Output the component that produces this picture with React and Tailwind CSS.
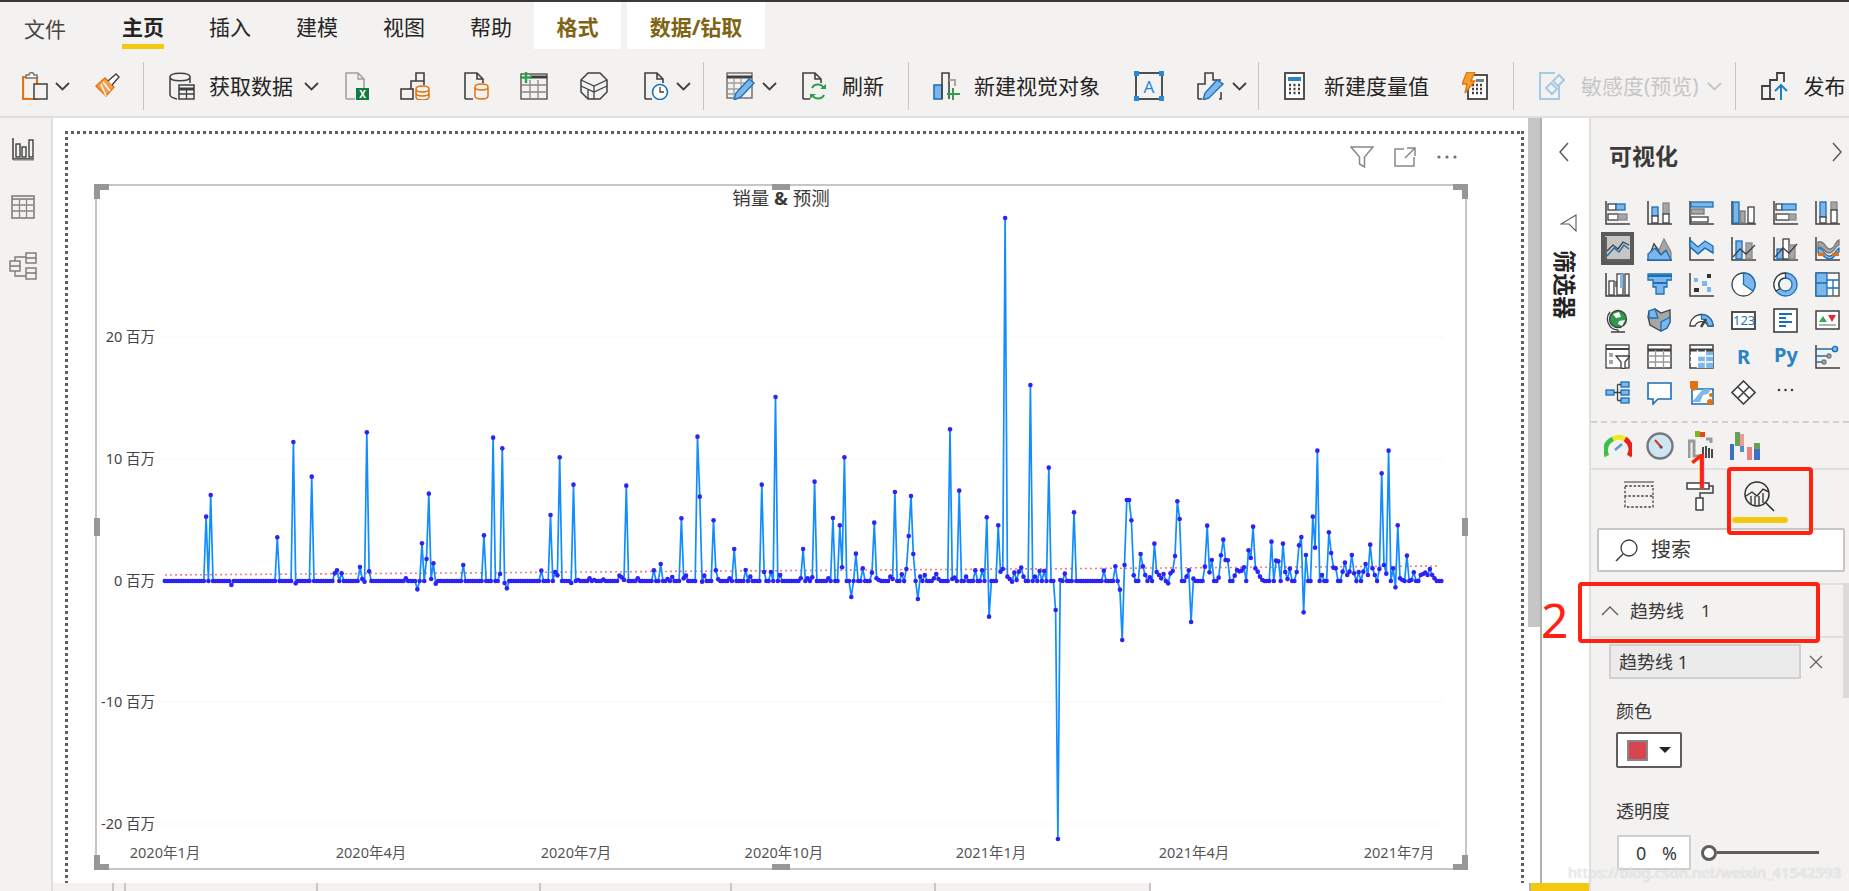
import React from 'react';

const k = '#404040', bf = '#7cb6ea', bs = '#1b6fb5', g = '#a6a6a6', o = '#e3730e';

function S({ s = 25, w, h, vb = '0 0 25 25', children, className }) {
  return (
    <svg width={w || s} height={h || s} viewBox={vb} fill="none" strokeWidth="1.3" className={'block shrink-0 ' + (className || '')}>
      {children}
    </svg>
  );
}
const Ax = () => <path d="M1 1V24H25" stroke={k} strokeWidth="1.5" />;

const viz = [
  <S key="a1"><Ax /><rect x="3" y="4" width="8" height="6" fill="#fff" stroke={k} /><rect x="11" y="4" width="9" height="6" fill={bf} stroke={bs} /><rect x="3" y="14" width="10" height="6" fill="#fff" stroke={k} /><rect x="13" y="14" width="9" height="6" fill={g} stroke="#888" /></S>,
  <S key="a2"><Ax /><rect x="5" y="7" width="6" height="9" fill={bf} stroke={bs} /><rect x="5" y="16" width="6" height="7" fill="#fff" stroke={k} /><rect x="16" y="3" width="6" height="11" fill={g} stroke="#888" /><rect x="16" y="14" width="6" height="9" fill="#fff" stroke={k} /></S>,
  <S key="a3"><Ax /><rect x="2" y="2" width="22" height="5" fill={bf} stroke={bs} /><rect x="2" y="9" width="13" height="5" fill={g} stroke="#777" /><rect x="2" y="17" width="17" height="5" fill="#fff" stroke={k} /></S>,
  <S key="a4"><Ax /><rect x="2" y="2" width="6" height="21" fill={bf} stroke={bs} /><rect x="9" y="11" width="5" height="12" fill={g} stroke="#777" /><rect x="17" y="7" width="6" height="16" fill="#fff" stroke={k} /></S>,
  <S key="a5"><Ax /><rect x="3" y="4" width="6" height="6" fill="#fff" stroke={k} /><rect x="9" y="4" width="14" height="6" fill={bf} stroke={bs} /><rect x="3" y="14" width="13" height="6" fill="#fff" stroke={k} /><rect x="16" y="14" width="7" height="6" fill={g} stroke="#888" /></S>,
  <S key="a6"><Ax /><rect x="5" y="2" width="6" height="15" fill={bf} stroke={bs} /><rect x="5" y="17" width="6" height="6" fill="#fff" stroke={k} /><rect x="16" y="2" width="6" height="8" fill={g} stroke="#888" /><rect x="16" y="10" width="6" height="13" fill="#fff" stroke={k} /></S>,

  <div key="b1" className="w-[33px] h-[33px] -m-[4px] border-[4px] border-[#5a5a5a] bg-[#c8c6c4]"><S w={25} h={25}><Ax /><path d="M2 20L9 12L14 16L19 9L24 13" stroke={bs} strokeWidth="1.5" /><path d="M2 15L8 9L13 13L18 6L24 9" stroke={k} /></S></div>,
  <S key="b2"><path d="M1 24L7 8L12 14L17 3L24 16V24Z" fill={g} stroke="#888" /><path d="M1 24L7 8L14 19L17 16L24 24Z" fill="#fff" stroke={k} /><path d="M1 24V18L8 12L14 19L19 14L24 24Z" fill={bf} stroke={bs} /></S>,
  <S key="b3"><Ax /><path d="M1 4L9 11L16 5L24 10V17L16 12L9 18L1 11Z" fill={bf} stroke={bs} /><path d="M1 11L9 18L16 12L24 17" stroke={bs} /></S>,
  <S key="b4"><Ax /><rect x="5" y="5" width="6" height="18" fill={bf} stroke={bs} /><rect x="15" y="7" width="6" height="16" fill={g} stroke="#888" /><path d="M2 21L9 13L15 18L24 9" stroke={k} /></S>,
  <S key="b5"><Ax /><rect x="4" y="13" width="6" height="10" fill={bf} stroke={bs} /><rect x="10" y="3" width="6" height="20" fill="#fff" stroke={k} /><rect x="16" y="9" width="6" height="14" fill={g} stroke="#888" /><path d="M2 21L10 12L16 17L24 8" stroke={k} /></S>,
  <S key="b6"><Ax /><path d="M3 6C10 4 10 13 15 13S20 5 24 4V9C20 10 19 17 14 17S9 10 3 11Z" fill={g} stroke="#777" /><path d="M3 12C9 11 9 21 15 20S20 14 24 12V16C19 18 19 24 14 23S8 18 3 17Z" fill={bf} stroke={bs} /><rect x="3" y="17" width="7" height="3" fill={o} /><rect x="17" y="17" width="7" height="3" fill={o} /></S>,

  <S key="c1"><Ax /><rect x="4" y="9" width="5" height="14" fill="#fff" stroke={k} /><rect x="9" y="9" width="6" height="6" fill="#808080" /><rect x="12" y="2" width="6" height="21" fill="#fff" stroke={k} /><rect x="15" y="2" width="3" height="14" fill={bf} /><rect x="20" y="2" width="4" height="21" fill="#fff" stroke={k} /></S>,
  <S key="c2"><path d="M1 2H25V8H20V15H17V22H9V15H6V8H1Z" fill={bf} stroke={bs} /><path d="M1 4H25M6 11H20" stroke={bs} strokeWidth="2" /></S>,
  <S key="c3"><Ax /><rect x="5" y="6" width="4" height="4" fill={bf} /><rect x="13" y="9" width="5" height="5" fill={bf} /><rect x="18" y="2" width="4" height="4" fill="#333" /><rect x="5" y="16" width="5" height="4" fill="#333" /><rect x="18" y="15" width="4" height="5" fill={bf} /></S>,
  <S key="c4"><circle cx="12.5" cy="12.5" r="11.5" fill="#fff" stroke={k} /><path d="M12.5 12.5V1A11.5 11.5 0 0 1 22 19Z" fill={bf} stroke={bs} /></S>,
  <S key="c5"><circle cx="12.5" cy="12.5" r="9" stroke={bf} strokeWidth="5" /><circle cx="12.5" cy="12.5" r="11.5" stroke={bs} /><circle cx="12.5" cy="12.5" r="6.5" stroke={bs} /><path d="M7 16.5A6.5 6.5 0 0 1 12.5 6V1A11.5 11.5 0 0 0 3 19Z" fill="#fff" stroke={k} /></S>,
  <S key="c6"><rect x="1" y="1" width="23" height="23" fill="#fff" stroke={k} /><rect x="1" y="1" width="11" height="23" fill={bf} stroke={bs} /><path d="M1 11H12M12 8H24M18 8V24M12 16H24" stroke={bs} /></S>,

  <S key="d1"><circle cx="13" cy="11" r="8.5" fill="#2d9a4e" stroke={k} /><path d="M8 6L14 4L16 9L11 10ZM14 13L20 12L17 18L13 16Z" fill="#fff" /><path d="M5 4A11 11 0 0 0 13 22M13 22V24M6 24H20" stroke={k} /></S>,
  <S key="d2"><path d="M2 3L8 1L14 5L23 2V14L20 20L14 23L10 21L3 17L1 9Z" fill={g} stroke={k} /><path d="M2 3L8 1L11 10L2 10ZM14 14L23 9V14L20 20L14 23Z" fill={bf} stroke={bs} /></S>,
  <S key="d3"><path d="M1 18A11.5 11.5 0 0 1 24 18H19A7 7 0 0 0 6 18Z" fill="#fff" stroke={k} /><path d="M12.5 6.5A11.5 11.5 0 0 1 24 18H19A7 7 0 0 0 12.5 11Z" fill={bf} stroke={bs} /><path d="M17 11L12 19" stroke={k} strokeWidth="2.5" /></S>,
  <div key="d4" className="w-[25px] h-[19px] mt-[3px] border-2 border-[#505050] bg-white text-[13px] leading-[14px] text-center text-[#1b75bc] font-['Noto_Sans',sans-serif] overflow-hidden">123</div>,
  <S key="d5"><rect x="1" y="1" width="23" height="23" fill="#fff" stroke={k} strokeWidth="1.6" /><path d="M6 6H19M6 10H13M6 14H19M6 18H13" stroke={bs} strokeWidth="2" /></S>,
  <S key="d6"><rect x="1" y="3" width="23" height="18" fill="#fff" stroke={k} strokeWidth="1.5" /><path d="M4 14L8 8L12 14Z" fill="#3aa655" /><path d="M13 7H21L17 14Z" fill="#e0293a" /><path d="M4 17H21" stroke="#888" /></S>,

  <S key="e1"><rect x="1" y="1" width="23" height="23" fill="#fff" stroke={k} /><path d="M1 5H24" stroke={k} strokeWidth="2" /><rect x="4" y="9" width="4" height="4" fill={g} /><rect x="4" y="16" width="4" height="4" fill={g} /><path d="M11 12H25L20 18V25L16 24V18Z" fill="#fff" stroke={k} /></S>,
  <S key="e2"><rect x="1" y="1" width="23" height="23" fill="#fff" stroke={k} strokeWidth="1.5" /><path d="M1 6H24" stroke={k} strokeWidth="3" /><path d="M1 12H24M1 18H24M8.5 6V24M16.5 6V24" stroke="#999" /></S>,
  <S key="e3"><rect x="1" y="1" width="23" height="23" fill="#fff" stroke={k} strokeWidth="1.5" /><rect x="8" y="12" width="16" height="12" fill={bf} /><rect x="16" y="6" width="8" height="7" fill={bf} /><path d="M1 6H24" stroke={k} strokeWidth="3" /><path d="M1 12H24M1 18H24M8.5 6V24M16.5 6V24" stroke="#fff" /></S>,
  <div key="e4" className="w-[25px] h-[25px] text-[20px] font-bold leading-[25px] text-center text-[#2b82c4] font-['Noto_Sans',sans-serif]">R</div>,
  <div key="e5" className="w-[28px] h-[25px] -ml-[1px] text-[20px] font-bold leading-[21px] text-center text-[#2b82c4] font-['Noto_Sans',sans-serif]">Py</div>,
  <S key="e6"><Ax /><path d="M1 5H19M1 12H13M1 18H8" stroke={bs} strokeWidth="1.5" /><circle cx="20" cy="5" r="2.7" fill={bf} stroke={bs} /><circle cx="14" cy="12" r="2" fill={g} stroke="#777" /><circle cx="9" cy="18" r="2" fill={g} stroke="#777" /></S>,

  <S key="f1"><rect x="1" y="10" width="8" height="5" fill={bf} stroke={bs} /><rect x="16" y="2" width="8" height="5" fill={bf} stroke={bs} /><rect x="16" y="10" width="8" height="5" fill={bf} stroke={bs} /><rect x="16" y="18" width="8" height="5" fill={bf} stroke={bs} /><path d="M9 12.5H16M12.5 4.5V20.5M12.5 4.5H16M12.5 20.5H16" stroke={k} /></S>,
  <S key="f2"><path d="M1 3H24V19H11L6 24V19H1Z" fill="#fff" stroke={bs} strokeWidth="1.6" /></S>,
  <S key="f3"><path d="M3 9H24V24H3Z" fill="#fff" stroke={bs} strokeWidth="1.6" /><path d="M14 9H22L19 14L14 15L11 22H3L9 15Z" fill={bf} /><path d="M1 1H9V8L5 11L1 8Z" fill={o} /><circle cx="22" cy="15" r="2" fill={o} /><circle cx="21" cy="22" r="3" fill={o} /></S>,
  <S key="f4"><path d="M12.5 1L24 12.5L12.5 24L1 12.5Z" fill="#fff" stroke={k} strokeWidth="1.6" /><path d="M7 7L18 18M18 7L12.5 12.5M7 18L12.5 12.5" stroke={k} strokeWidth="1.6" /></S>,
  <S key="f5"><circle cx="6" cy="10" r="1.3" fill={k} /><circle cx="12.5" cy="10" r="1.3" fill={k} /><circle cx="19" cy="10" r="1.3" fill={k} /></S>,
];

const Chev = ({ className, c = '#404040' }) => (
  <S w={15} h={9} vb="0 0 15 9" className={className}><path d="M1 1L7.5 7.5L14 1" stroke={c} strokeWidth="1.8" /></S>
);
const Sep = ({ className }) => <div className={'w-px h-[48px] bg-[#c8c6c4] shrink-0 ' + className} />;

const T = ({ className, children }) => <span className={'text-[21px] leading-none whitespace-nowrap text-[#252423] shrink-0 ' + className}>{children}</span>;

const z7 = [[226,350],[238,285],[290,555],[414,412],[455,126],[462,550],[502,230],[562,520],[568,511],[578,520],[626,501],[632,537],[638,545],[644,97],[650,514],[750,535],[780,568],[791,430],[803,477],[809,281],[815,537],[821,490],[827,551],[898,495],[950,406],[974,113],[992,522],[998,145],[1004,549],[1010,565],[1098,512],[1122,345],[1139,516],[1145,526],[1151,172],[1180,549],[1186,254],[1198,540],[1228,535],[1240,540],[1263,539],[1304,527],[1310,532],[1316,540],[1322,257],[1352,535],[1392,511],[1410,492],[1428,537],[1445,531],[1469,355],[1475,535],[1481,527],[1510,110],[1516,290],[1522,545],[1528,527],[1551,361],[1557,511],[1563,538]];
const z8 = [[20,535],[30,447],[54,510],[64,530],[88,254],[93,516],[108,516],[131,525],[175,535],[180,447],[189,535],[199,532],[204,245],[234,535],[243,354],[258,376],[262,502],[267,172],[282,591],[291,461],[306,505],[325,518],[330,368],[335,535],[340,540],[364,530],[369,537],[374,276],[393,523],[398,507],[403,408],[408,288],[413,462],[427,597],[432,530],[442,525],[462,535],[466,522],[471,537],[494,88],[500,537],[505,533],[514,272],[529,530],[548,511],[562,511],[572,352],[577,650],[596,376],[601,515],[606,507],[616,530],[621,537],[626,545],[631,518],[636,540],[640,515],[645,503],[650,530],[669,466],[679,530],[684,513],[698,513],[708,203],[722,630],[733,540],[741,521],[761,337],[824,512],[848,499],[858,569],[868,495],[872,300],[877,300],[883,361],[887,526],[902,462],[906,499],[911,525],[921,532],[935,431],[940,516],[945,525],[950,535],[955,522],[960,543],[965,550],[970,520],[974,513],[979,468],[984,304],[988,357],[1003,530],[1008,511],[1018,536],[1042,500],[1047,377],[1052,517],[1056,480],[1071,533],[1076,466],[1081,419],[1086,480],[1090,481],[1105,527],[1110,510],[1115,514],[1120,512],[1124,502],[1134,451],[1139,474],[1143,380],[1148,505],[1153,515],[1158,530],[1163,540],[1187,425],[1192,482],[1197,484],[1207,431],[1212,516],[1216,516],[1221,537],[1226,506],[1240,516],[1245,436],[1250,411],[1255,637],[1260,465],[1275,350],[1279,443],[1284,152],[1294,525],[1308,397],[1313,459],[1318,503],[1323,505],[1337,515],[1342,488],[1347,525],[1352,515],[1357,465],[1362,520],[1372,516],[1381,515],[1386,492],[1391,525],[1395,434],[1400,505],[1405,525],[1415,507],[1419,220],[1424,495],[1429,521],[1434,152],[1444,505],[1449,562],[1454,376],[1459,535],[1464,540],[1478,467],[1483,497],[1487,540],[1492,517],[1507,525],[1512,522],[1517,518],[1522,525],[1526,507],[1531,525],[1536,535]];
const abs = [[774.5,397],[1004,218],[1031,385],[1058,839],[1121.3,640],[1191.6,622]];

const X0 = 164.8, STEP = 2.296, N = 557;
const ys = new Array(N).fill(581);
const put = (x, y) => { const i = Math.round((x - X0) / STEP); if (i >= 0 && i < N) ys[i] = y; };
z7.forEach(([a, b]) => put(120 + a / 2.613, 400 + b / 3));
z8.forEach(([a, b]) => put(720 + a / 2.148, 400 + b / 3));
abs.forEach(([a, b]) => put(a, b));
const pts = ys.map((y, i) => [X0 + i * STEP, y]);
const linePts = pts.map(([x, y]) => x.toFixed(1) + ',' + y.toFixed(1)).join(' ');

const yLabels = [['20 百万', 337], ['10 百万', 459], ['0 百万', 581], ['-10 百万', 702], ['-20 百万', 824]];
const xLabels = [['2020年1月', 165], ['2020年4月', 371], ['2020年7月', 576], ['2020年10月', 784], ['2021年1月', 991], ['2021年4月', 1194], ['2021年7月', 1399]];

function Chart() {
  return (
    <svg width="1368" height="682" viewBox="97 186 1368 682" className="block">
      {[337, 459, 702, 824].map(y => <line key={y} x1="161" x2="1443" y1={y} y2={y} stroke="#e6e6e6" strokeDasharray="1 3" />)}
      {yLabels.map(([t, y]) => <text key={t} x="155" y={y + 5} textAnchor="end" fontSize="14.5" fill="#444">{t}</text>)}
      {xLabels.map(([t, x]) => <text key={t} x={x} y="858" textAnchor="middle" fontSize="14.5" fill="#555">{t}</text>)}
      <line x1="165" y1="575" x2="1439" y2="566" stroke="#e8606a" strokeWidth="1.6" strokeDasharray="2 3" opacity="0.8" />
      <polyline points={linePts} fill="none" stroke="#118dff" strokeWidth="1.7" />
      {pts.map(([x, y], i) => <circle key={i} cx={x} cy={y} r="2.3" fill="#2e22f5" />)}
    </svg>
  );
}

const H = ({ className }) => <div className={'absolute bg-[#979797] ' + className} />;

export default function App() {
  return (
    <div className="w-[1849px] h-[891px] overflow-hidden flex flex-col bg-[#f3f2f1] font-['Noto_Sans','Noto_Sans_CJK_SC',sans-serif] text-[#252423] relative">
      <div className="h-[2px] bg-[#3b3a39] shrink-0" />
      {/* tabs */}
      <div className="h-[47px] shrink-0 flex items-stretch pl-[24px]">
        <T className="flex items-center pt-[8px] text-[#484644]">文件</T>
        <T className="flex items-center pt-[9px] border-b-[5px] border-[#f2c811] ml-[56px] font-bold">主页</T>
        <T className="flex items-center pt-[4px] ml-[45px] text-[#3b3a39]">插入</T>
        <T className="flex items-center pt-[4px] ml-[45px] text-[#3b3a39]">建模</T>
        <T className="flex items-center pt-[4px] ml-[45px] text-[#3b3a39]">视图</T>
        <T className="flex items-center pt-[4px] ml-[45px] text-[#3b3a39]">帮助</T>
        <div className="ml-[22px] w-[87px] bg-white flex items-center justify-center pt-[4px]"><span className="text-[21px] leading-none font-bold text-[#7f6414]">格式</span></div>
        <div className="ml-[6px] w-[138px] bg-white flex items-center justify-center pt-[4px]"><span className="text-[21px] leading-none font-bold text-[#7f6414]">数据/钻取</span></div>
      </div>
      {/* ribbon */}
      <div className="h-[69px] shrink-0 border-b-2 border-[#e1dfdd] flex items-center pl-[22px] pt-[7px]">
        <S w={26} h={28} vb="0 0 26 28"><path d="M1 27V5H15V27Z" stroke={o} strokeWidth="2.2" /><path d="M4 6V3H7A2 2 0 0 1 12 3H15V6Z" fill="#fff" stroke="#707070" /><rect x="12" y="12" width="13" height="15" fill="#f3f2f1" stroke={k} strokeWidth="1.5" /></S>
        <Chev className="ml-[7px]" />
        <S w={26} h={28} vb="0 0 26 28" className="ml-[24px]"><path d="M2 14L11 6L20 15L12 24Z" fill="#f3a14f" stroke={o} strokeWidth="1.4" /><path d="M12 24L7 12M16 19L9 10" stroke="#fff" /><path d="M14 9L22 2L25 5L18 13" fill="#fff" stroke={k} strokeWidth="1.4" /></S>
        <Sep className="ml-[23px]" />
        <S w={26} h={28} vb="0 0 26 28" className="ml-[25px]"><path d="M1 5C1 0 21 0 21 5V11M1 5C1 10 21 10 21 5M1 5V23C1 25 4 26 8 27" stroke={k} strokeWidth="1.5" /><rect x="10" y="13" width="15" height="14" fill="#f3f2f1" stroke={k} strokeWidth="1.5" /><path d="M10 17H25" stroke={k} strokeWidth="3" /><path d="M10 22H25M17.5 17V27" stroke={k} /></S>
        <T className="ml-[14px]">获取数据</T>
        <Chev className="ml-[11px]" />
        <S w={26} h={28} vb="0 0 26 28" className="ml-[25px]"><path d="M2 27V1H14L20 7V18M2 27H11" stroke="#a19f9d" strokeWidth="1.5" /><path d="M14 1V7H20" stroke="#a19f9d" /><rect x="12" y="16" width="13" height="12" fill="#107c41" /><text x="18.5" y="26" fontSize="10" textAnchor="middle" fontWeight="700" fill="#fff">X</text></S>
        <S w={30} h={28} vb="0 0 30 28" className="ml-[30px]"><rect x="1" y="17" width="12" height="10" stroke={k} strokeWidth="1.6" /><path d="M11 17V9H24V1H16V9" stroke={k} strokeWidth="1.6" /><path d="M24 9V13" stroke={k} strokeWidth="1.6" /><path d="M16 17C16 13 29 13 29 17V25C29 29 16 29 16 25ZM16 17C16 21 29 21 29 17M16 21C16 25 29 25 29 21" fill="#f3f2f1" stroke={o} strokeWidth="1.5" /></S>
        <S w={26} h={28} vb="0 0 26 28" className="ml-[33px]"><path d="M2 27V1H14L20 7V11M14 1V7H20M2 27H10" stroke={k} strokeWidth="1.6" /><path d="M12 15C12 11 25 11 25 15V24C25 28 12 28 12 24ZM12 15C12 19 25 19 25 15" stroke={o} strokeWidth="1.5" /></S>
        <S w={28} h={28} vb="0 0 28 28" className="ml-[31px]"><rect x="1" y="2" width="26" height="25" stroke="#605e5c" strokeWidth="1.5" /><path d="M10 5H27" stroke={k} strokeWidth="3" /><path d="M1 13H27M1 20H27M10 8V27M18 8V27" stroke="#8a8886" strokeWidth="1.3" /><path d="M6 0V11M0 5.5H12" stroke="#2e9e4f" strokeWidth="2.4" /></S>
        <S w={28} h={28} vb="0 0 28 28" className="ml-[32px]"><path d="M8 1H20L27 8V20L20 27H8L1 20V8Z" stroke={k} strokeWidth="1.5" /><path d="M1 8L14 14L27 8M1 14L14 20L27 14M14 14V27M8 18L8 27" stroke={k} /></S>
        <S w={26} h={28} vb="0 0 26 28" className="ml-[35px]"><path d="M2 27V1H14L20 7V11M14 1V7H20M2 27H9" stroke={k} strokeWidth="1.6" /><circle cx="17" cy="20" r="7.5" fill="#fff" stroke="#1b75bc" strokeWidth="1.6" /><path d="M17 15V20H21" stroke={k} /></S>
        <Chev className="ml-[7px]" />
        <Sep className="ml-[12px]" />
        <S w={29} h={28} vb="0 0 29 28" className="ml-[22px]"><rect x="1" y="1" width="25" height="25" stroke="#605e5c" strokeWidth="1.3" /><path d="M1 5H26" stroke={k} strokeWidth="3" /><path d="M1 11H20M1 17H15M1 22H10M8 7V26M15 7V22" stroke="#a19f9d" /><path d="M8 28L10 21L23 7L28 11L15 25Z" fill={bf} stroke="#1b75bc" strokeWidth="1.4" /></S>
        <Chev className="ml-[7px]" />
        <S w={26} h={28} vb="0 0 26 28" className="ml-[24px]"><path d="M2 27V1H14L20 7V11M14 1V7H20M2 27H9" stroke={k} strokeWidth="1.6" /><path d="M23 17A6.5 6.5 0 0 0 11 16M11 22A6.5 6.5 0 0 0 23 23" stroke="#2e9e4f" strokeWidth="2" /><path d="M19 17H25V12ZM15 22H9V27Z" fill="#2e9e4f" /></S>
        <T className="ml-[15px]">刷新</T>
        <Sep className="ml-[24px]" />
        <S w={27} h={28} vb="0 0 27 28" className="ml-[24px]"><rect x="1" y="13" width="8" height="14" fill={bf} stroke="#1b75bc" strokeWidth="1.6" /><path d="M9 27V1H16V27" stroke={k} strokeWidth="1.6" /><path d="M16 8H22V14" stroke={g} strokeWidth="2" /><path d="M20 16V28M14 22H27" stroke="#2e9e4f" strokeWidth="2" /></S>
        <T className="ml-[14px]">新建视觉对象</T>
        <div className="ml-[35px] w-[28px] h-[28px] relative flex items-center justify-center border-2 border-[#505050] text-[17px] leading-none text-[#2b88d8] shrink-0 font-['Noto_Sans',sans-serif]">A
          <span className="absolute -left-[3px] -top-[3px] w-[5px] h-[5px] bg-[#2b88d8]" /><span className="absolute -right-[3px] -top-[3px] w-[5px] h-[5px] bg-[#2b88d8]" /><span className="absolute -left-[3px] -bottom-[3px] w-[5px] h-[5px] bg-[#2b88d8]" /><span className="absolute -right-[3px] -bottom-[3px] w-[5px] h-[5px] bg-[#2b88d8]" />
        </div>
        <S w={27} h={28} vb="0 0 27 28" className="ml-[34px]"><path d="M1 27V12H8V1H16V8H24M1 27H5M22 27H24V20" stroke={k} strokeWidth="1.6" /><path d="M6 28L8 21L20 8L26 12L12 26Z" fill={bf} stroke="#1b75bc" strokeWidth="1.4" /></S>
        <Chev className="ml-[8px]" />
        <Sep className="ml-[11px]" />
        <S w={21} h={28} vb="0 0 21 28" className="ml-[25px]"><rect x="1" y="1" width="19" height="26" fill="#fff" stroke={k} strokeWidth="1.8" /><rect x="4" y="5" width="13" height="4" fill="#2b82c4" /><path d="M5 13H7M9.5 13H11.5M14 13H16M5 17H7M9.5 17H11.5M14 17H16M5 21H7M9.5 21H11.5M14 21H16" stroke={k} strokeWidth="2.4" /></S>
        <T className="ml-[19px]">新建度量值</T>
        <S w={26} h={28} vb="0 0 26 28" className="ml-[33px]"><rect x="6" y="3" width="19" height="24" fill="#fff" stroke={k} strokeWidth="1.8" /><rect x="14" y="7" width="8" height="3" fill="#808080" /><path d="M10 13H12M14 13H16M18 13H20M10 17H12M14 17H16M18 17H20M10 21H12M14 21H16M18 21H20" stroke={k} strokeWidth="2.4" /><path d="M5 0H13L9 9H13L3 21L5 12H0Z" fill="#f0a030" stroke={o} /></S>
        <Sep className="ml-[25px]" />
        <S w={26} h={28} vb="0 0 26 28" className="ml-[25px]"><path d="M16 1H1V27H20V12" stroke="#a3cbe6" strokeWidth="2" /><path d="M7 16L13 22L18 17L12 11ZM14 9L19 14L25 8L20 3Z" stroke="#a3cbe6" strokeWidth="2" /></S>
        <span className="ml-[16px] text-[21px] leading-none whitespace-nowrap text-[#c8c6c4] shrink-0">敏感度(预览)</span>
        <Chev className="ml-[8px]" c="#c8c6c4" />
        <Sep className="ml-[13px]" />
        <S w={27} h={28} vb="0 0 27 28" className="ml-[25px]"><path d="M14 27H1V14H9V27M9 14V8H16V1H23V10" stroke={k} strokeWidth="1.8" /><path d="M20 28V13M14 19L20 13L26 19" stroke="#1b82c4" strokeWidth="2" /></S>
        <T className="ml-[16px]">发布</T>
      </div>
      {/* main */}
      <div className="flex-1 flex min-h-0">
        <div className="w-[53px] shrink-0 border-r-2 border-[#e1dfdd] flex flex-col items-center pt-[19px]">
          <S w={24} h={24} vb="0 0 24 24" className="mr-[6px]"><path d="M2 1V22H23" stroke="#333" strokeWidth="1.4" /><path d="M2 23H23" stroke="#999" /><rect x="5" y="7" width="4" height="13" stroke="#333" /><rect x="11" y="10" width="4" height="10" stroke="#333" /><rect x="18" y="3" width="4" height="17" stroke="#333" /></S>
          <S w={24} h={24} vb="0 0 24 24" className="mt-[34px] mr-[6px]"><rect x="1" y="1" width="22" height="22" stroke="#7a7876" strokeWidth="1.5" /><path d="M1 4H23" stroke="#7a7876" strokeWidth="1.5" /><path d="M1 10H23M1 16H23M8.5 4V23M15.5 4V23" stroke="#8a8886" /></S>
          <S w={28} h={28} vb="0 0 28 28" className="mt-[33px] mr-[6px]"><rect x="1" y="9" width="10" height="10" stroke="#7a7876" strokeWidth="1.4" /><rect x="17" y="1" width="10" height="10" stroke="#7a7876" strokeWidth="1.4" /><rect x="17" y="16" width="10" height="11" stroke="#7a7876" strokeWidth="1.4" /><path d="M1 14H11M17 6H27M17 21H27M6 9V5H17M6 19V24H17" stroke="#7a7876" /></S>
        </div>
        <div className="w-[1536px] shrink-0 flex flex-col">
          <div className="h-[765px] flex">
            <div className="w-[1475px] shrink-0 bg-white pl-[12px] pt-[13px] overflow-hidden">
              <div className="h-[800px] w-[1459px] [background:repeating-linear-gradient(90deg,#605e5c_0_3px,transparent_3px_6px)_0_0/100%_3px_no-repeat,repeating-linear-gradient(180deg,#605e5c_0_3px,transparent_3px_6px)_0_0/3px_100%_no-repeat,repeating-linear-gradient(180deg,#605e5c_0_3px,transparent_3px_6px)_100%_0/3px_100%_no-repeat]">
                <div className="h-[53px] flex items-center justify-end pr-[66px] gap-[20px] pb-[2px]">
                  <S w={24} h={22} vb="0 0 24 22"><path d="M1 1H23L14.5 11V21L9.5 18V11Z" stroke="#8a8886" strokeWidth="1.5" /></S>
                  <S w={22} h={20} vb="0 0 22 20"><path d="M10 2H1V19H20V10M13 1H21V9M21 1L11 11" stroke="#8a8886" strokeWidth="1.5" /></S>
                  <S w={22} h={6} vb="0 0 22 6"><circle cx="3" cy="3" r="1.6" fill="#707070" /><circle cx="11" cy="3" r="1.6" fill="#707070" /><circle cx="19" cy="3" r="1.6" fill="#707070" /></S>
                </div>
                <div className="relative ml-[30px] w-[1372px] h-[686px] border-2 border-[#c8c6c4]">
                  <Chart />
                  <div className="absolute inset-x-0 top-0 text-center text-[18.5px] leading-[24px] text-[#3b3a39]">销量 <span className="font-bold">&amp;</span> 预测</div>
                  <H className="-left-[3px] -top-[2px] w-[15px] h-[6px]" /><H className="-left-[3px] -top-[2px] w-[6px] h-[15px]" />
                  <H className="-right-[3px] -top-[2px] w-[15px] h-[6px]" /><H className="-right-[3px] -top-[2px] w-[6px] h-[15px]" />
                  <H className="-left-[3px] -bottom-[2px] w-[15px] h-[6px]" /><H className="-left-[3px] -bottom-[2px] w-[6px] h-[15px]" />
                  <H className="-right-[3px] -bottom-[2px] w-[15px] h-[6px]" /><H className="-right-[3px] -bottom-[2px] w-[6px] h-[15px]" />
                  <H className="left-[675px] -top-[2px] w-[18px] h-[6px]" /><H className="left-[675px] -bottom-[2px] w-[18px] h-[6px]" />
                  <H className="-left-[3px] top-[332px] w-[6px] h-[18px]" /><H className="-right-[3px] top-[332px] w-[6px] h-[18px]" />
                </div>
              </div>
            </div>
            <div className="w-[14px] bg-white border-r-2 border-[#b3b0ad] shrink-0 h-full">
              <div className="w-[12px] h-[509px] bg-[#c8c6c4]" />
            </div>
            <div className="w-[47px] bg-white shrink-0 flex flex-col items-start">
              <S w={10} h={20} vb="0 0 10 20" className="ml-[17px] mt-[24px]"><path d="M9 1L1 10L9 19" stroke="#555" strokeWidth="1.4" /></S>
              <S w={17} h={18} vb="0 0 17 18" className="ml-[18px] mt-[52px]"><path d="M16 1V17L9 10H1Z" fill="#fff" stroke="#605e5c" strokeWidth="1.1" /></S>
              <div className="ml-[11px] mt-[18px] [writing-mode:vertical-rl] [text-orientation:sideways] text-[23px] leading-[24px] font-bold text-[#252423]">筛选器</div>
            </div>
          </div>
          <div className="flex-1 flex">
            <div className="w-[1098px] relative">
              <div className="absolute left-[59px] top-0 bottom-0 w-[2px] bg-[#c8c6c4]" />
              <div className="absolute left-[71px] top-0 bottom-0 w-[2px] bg-[#c8c6c4]" />
              <div className="absolute left-[263px] top-0 bottom-0 w-[2px] bg-[#c8c6c4]" />
              <div className="absolute left-[486px] top-0 bottom-0 w-[2px] bg-[#c8c6c4]" />
              <div className="absolute left-[677px] top-0 bottom-0 w-[2px] bg-[#c8c6c4]" />
              <div className="absolute left-[881px] top-0 bottom-0 w-[2px] bg-[#c8c6c4]" />
              <div className="absolute left-[1096px] top-0 bottom-0 w-[2px] bg-[#c8c6c4]" />
            </div>
            <div className="w-[380px] bg-white border-r-2 border-[#b3b0ad]" />
            <div className="flex-1 bg-[#f2c811]" />
          </div>
        </div>
        <div className="flex-1 border-l-2 border-[#e1dfdd] relative flex flex-col overflow-hidden">
          <div className="h-[76px] shrink-0 flex items-center justify-between pl-[18px] pr-[7px]">
            <span className="text-[23px] leading-none font-bold text-[#3b3a39]">可视化</span>
            <S w={10} h={20} vb="0 0 10 20" className="-mt-[8px]"><path d="M1 1L9 10L1 19" stroke="#555" strokeWidth="1.4" /></S>
          </div>
          <div className="mt-[6px] pl-[14px] grid grid-cols-[repeat(6,42px)] auto-rows-[36px]">
            {viz.map((v, i) => <div key={i} className="w-[25px] h-[25px]">{v}</div>)}
          </div>
          <div className="mt-[5px] border-t-2 border-dashed border-[#d2d0ce] shrink-0" />
          <div className="h-[45px] shrink-0 flex items-center pl-[13px] gap-[14px]">
            <S w={28} h={28} vb="0 0 28 28"><path d="M3 24A12 12 0 0 1 9 7" stroke="#3bc04a" strokeWidth="5" /><path d="M9 7A12 12 0 0 1 21 7" stroke="#f5e81a" strokeWidth="5" /><path d="M21 7A12 12 0 0 1 25 24" stroke="#e8201a" strokeWidth="5" /><path d="M11 18L18 12" stroke="#5a9bd5" strokeWidth="2.5" /></S>
            <S w={28} h={28} vb="0 0 28 28"><circle cx="14" cy="14" r="12.5" fill="#cfe6f5" stroke="#77787a" strokeWidth="2.4" /><path d="M9 8L16 16" stroke="#d9342b" strokeWidth="2" /><circle cx="15" cy="15" r="1.6" fill="#555" /></S>
            <S w={28} h={30} vb="0 0 28 30"><rect x="7" y="0" width="5" height="6" fill="#7eb61a" /><rect x="12" y="1" width="5" height="5" fill="#e8481a" /><path d="M1 27V10H6V25H12M18 8H23V12" stroke="#9a9a9a" strokeWidth="3" /><rect x="12" y="13" width="15" height="15" fill="#f0f0f0" /><path d="M15 16V27M18 15V27M21 17V27M24 18V27" stroke="#222" strokeWidth="1.6" /></S>
            <S w={30} h={30} vb="0 0 30 30"><rect x="0" y="13" width="4" height="16" fill="#3d6fc4" /><rect x="5" y="1" width="5" height="14" fill="#66a05a" /><rect x="10" y="3" width="4" height="12" fill="#ef9a9a" /><rect x="10" y="15" width="4" height="6" fill="#4e8fd0" /><rect x="17" y="16" width="5" height="13" fill="#ef7f7f" /><rect x="24" y="12" width="6" height="17" fill="#3d6fc4" /><rect x="24" y="12" width="6" height="6" fill="#66a05a" /></S>
          </div>
          <div className="h-[2px] bg-[#e1dfdd] shrink-0" />
          <div className="h-[58px] shrink-0 relative flex items-start pt-[11px]">
            <S w={30} h={28} vb="0 0 30 28" className="ml-[33px]"><path d="M0 1H30" stroke="#555" strokeWidth="1.2" /><path d="M1 5H29V15H1ZM1 15V26H29V15" stroke="#444" strokeWidth="1.3" strokeDasharray="2.5 1.8" /></S>
            <S w={28} h={30} vb="0 0 28 30" className="ml-[32px]"><rect x="1" y="2" width="22" height="6" fill="#fff" stroke="#404040" strokeWidth="1.5" /><path d="M23 5H27V12H14V17" stroke="#404040" strokeWidth="1.5" /><rect x="10" y="17" width="7" height="12" fill="#fff" stroke="#404040" strokeWidth="1.5" /></S>
            <S w={31} h={31} vb="0 0 31 31" className="ml-[30px]"><circle cx="13" cy="13" r="12" stroke="#303030" strokeWidth="1.5" /><path d="M2 15L8 11L13 15L19 8L25 11" stroke="#303030" strokeWidth="1.4" /><path d="M7 15V23M11 15V24M15 15V24M19 12V22" stroke="#303030" /><path d="M21 21L30 30" stroke="#303030" strokeWidth="1.6" /></S>
            <div className="absolute left-[141px] top-[47px] w-[56px] h-[6px] rounded-full bg-[#f2c811]" />
          </div>
          <div className="ml-[6px] w-[248px] h-[44px] shrink-0 border-2 border-[#c8c6c4] rounded-[2px] bg-white flex items-center pl-[16px]">
            <S w={23} h={23} vb="0 0 23 23"><circle cx="14" cy="9" r="8" stroke="#3b3a39" strokeWidth="1.3" /><path d="M8 15L1 22" stroke="#3b3a39" strokeWidth="1.5" /></S>
            <span className="ml-[13px] text-[20px] leading-none text-[#3b3a39]">搜索</span>
          </div>
          <div className="mt-[11px] h-[55px] shrink-0 border-y-2 border-[#e1dfdd] flex items-center pl-[10px]">
            <S w={18} h={10} vb="0 0 18 10"><path d="M1 9L9 1L17 9" stroke="#605e5c" strokeWidth="1.3" /></S>
            <span className="ml-[11px] text-[18px] leading-none text-[#3b3a39] whitespace-pre">趋势线</span>
            <span className="ml-[17px] text-[17px] leading-none text-[#3b3a39]">1</span>
          </div>
          <div className="mt-[6px] ml-[18px] flex items-center shrink-0">
            <div className="w-[192px] h-[35px] bg-[#ebebeb] border-2 border-[#d2d0ce] flex items-center pl-[8px] text-[18px] leading-none text-[#3b3a39]">趋势线 1</div>
            <S w={14} h={14} vb="0 0 14 14" className="ml-[8px]"><path d="M1 1L13 13M13 1L1 13" stroke="#605e5c" strokeWidth="1.2" /></S>
          </div>
          <div className="mt-[22px] ml-[25px] text-[18px] leading-[20px] text-[#3b3a39] shrink-0">颜色</div>
          <div className="mt-[11px] ml-[25px] w-[66px] h-[36px] shrink-0 bg-white border-2 border-[#605e5c] rounded-[2px] flex items-center pl-[9px]">
            <div className="w-[21px] h-[21px] bg-[#d64550] border-2 border-[#8a8886]" />
            <S w={12} h={6} vb="0 0 12 6" className="ml-[11px]"><path d="M0 0H12L6 6Z" fill="#252423" /></S>
          </div>
          <div className="mt-[33px] ml-[25px] text-[18px] leading-[20px] text-[#3b3a39] shrink-0">透明度</div>
          <div className="mt-[14px] ml-[26px] flex items-center shrink-0">
            <div className="w-[74px] h-[35px] bg-white border-2 border-[#d2d0ce] flex items-center justify-between pl-[17px] pr-[12px] text-[18px] leading-none text-[#3b3a39]"><span>0</span><span>%</span></div>
            <div className="w-[118px] ml-[10px] flex items-center">
              <div className="w-[16px] h-[16px] shrink-0 rounded-full bg-white border-[3px] border-[#605e5c]" />
              <div className="flex-1 h-[3px] bg-[#605e5c]" />
            </div>
          </div>
          <div className="absolute right-0 top-[465px] w-[6px] h-[115px] bg-[#dcdbd9]" />
        </div>
      </div>
      {/* annotations */}
      <div className="absolute left-[1727px] top-[467px] w-[86px] h-[68px] border-[4px] border-[#ff2211] rounded-[4px]" />
      <div className="absolute left-[1578px] top-[582px] w-[242px] h-[61px] border-[4px] border-[#ff2211] rounded-[4px]" />
      <div className="absolute left-[1687px] top-[442px] text-[48px] leading-[56px] text-[#ff2211] font-['Noto_Sans',sans-serif]">1</div>
      <div className="absolute left-[1541px] top-[592px] text-[48px] leading-[56px] text-[#ff2211] font-['Noto_Sans',sans-serif]">2</div>
      <div className="absolute left-[1568px] top-[860px] text-[15px] leading-[24px] text-white/70 font-['Noto_Sans',sans-serif] [text-shadow:0_0_1px_rgba(120,120,120,0.5)]">https://blog.csdn.net/weixin_41542593</div>
    </div>
  );
}
